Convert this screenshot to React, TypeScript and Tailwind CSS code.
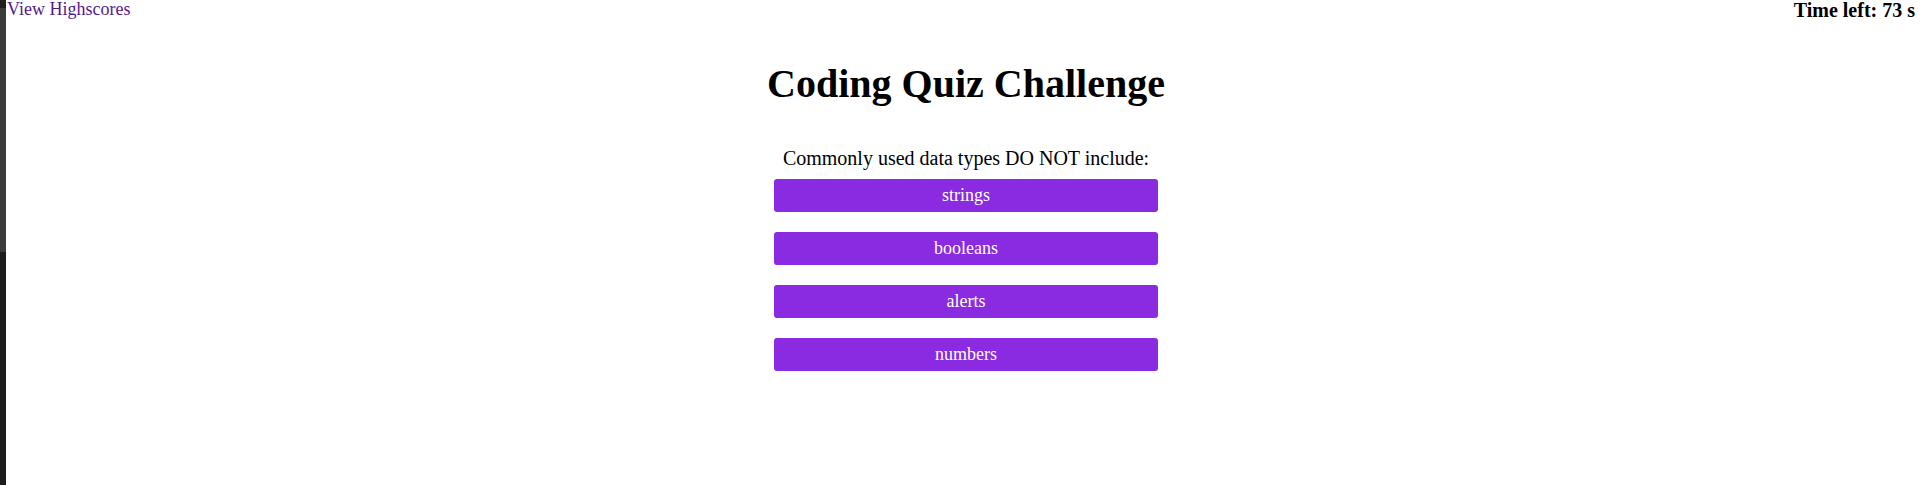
const choices = ['strings', 'booleans', 'alerts', 'numbers'];

export default function App() {
  return (
    <div className="flex min-h-[485px] bg-white font-['Liberation_Serif',serif] text-black">
      <div className="flex w-[6px] shrink-0 flex-col">
        <div className="h-[8px] bg-[#1f1f1f]" />
        <div className="h-[244px] bg-[#3b3b3b]" />
        <div className="flex-1 bg-[#1c1c1c]" />
      </div>
      <div className="flex flex-1 flex-col">
        <header className="flex items-start justify-between pr-[11px]">
          <a href="#" className="pl-[1px] text-[18px] leading-[18px] text-[#551a8b]">
            View Highscores
          </a>
          <div className="text-[20px] font-bold leading-[20px]">Time left: 73 s</div>
        </header>
        <main className="flex flex-col items-center">
          <h1 className="mt-[40px] text-[40px] font-bold leading-[48px]">Coding Quiz Challenge</h1>
          <p className="mt-[38px] text-[20px] leading-[24px]">Commonly used data types DO NOT include:</p>
          <div className="mt-[9px] flex flex-col gap-[20px]">
            {choices.map((c) => (
              <button
                key={c}
                className="h-[33px] w-[384px] rounded-[3px] bg-[#8a2be2] text-[18px] text-white"
              >
                {c}
              </button>
            ))}
          </div>
        </main>
      </div>
    </div>
  );
}
